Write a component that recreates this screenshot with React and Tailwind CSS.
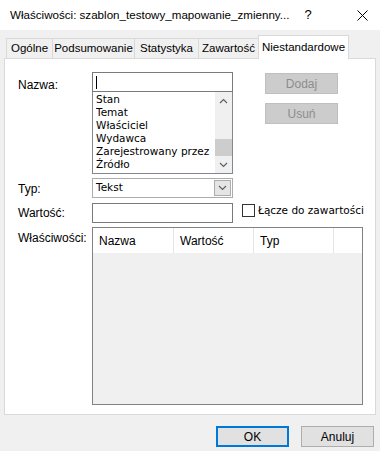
import React from 'react';

const tabs = [
  ['Ogólne', 'w-[47px]'],
  ['Podsumowanie', 'w-[82px]'],
  ['Statystyka', 'w-[64px]'],
  ['Zawartość', 'w-[60px]'],
];
const items = ['Stan', 'Temat', 'Właściciel', 'Wydawca', 'Zarejestrowany przez', 'Źródło'];
const listFont = { fontFamily: '"DejaVu Sans", sans-serif' };

const Chevron = ({ up }) => (
  <svg width="9" height="6" viewBox="0 0 9 6" fill="none" stroke="#606060" strokeWidth="1.2">
    {up ? <path d="M1 5 L4.5 1.5 L8 5" /> : <path d="M1 1 L4.5 4.5 L8 1" />}
  </svg>
);

const App = () => {
  return (
    <div className="w-[380px] h-[451px] bg-[#f0f0f0] text-[12px] text-black overflow-hidden" style={{ fontFamily: '"Liberation Sans", Arial, sans-serif' }}>
      {/* title bar */}
      <div className="h-[30px] bg-white flex items-center pl-[10px]">
        <span className="flex-1 whitespace-nowrap overflow-hidden text-[11.6px]">Właściwości: szablon_testowy_mapowanie_zmienny...</span>
        <span className="w-[20px] text-center text-[13px]">?</span>
        <span className="w-[26px]" />
        <span className="w-[36px] flex justify-center">
          <svg width="11" height="11" viewBox="0 0 11 11" stroke="#000" strokeWidth="1">
            <path d="M0.5 0.5 L10.5 10.5 M10.5 0.5 L0.5 10.5" />
          </svg>
        </span>
      </div>

      {/* tabs */}
      <div className="flex items-end pl-[6px] mt-[5px] h-[23px] relative z-10 text-[11.5px]">
        {tabs.map(([t, w], i) => (
          <div key={t} className={`${w} h-[20px] flex items-center justify-center whitespace-nowrap border-t border-[#d9d9d9] bg-[#f0f0f0] ${i === 0 ? 'border-l' : ''} border-r`}>
            {t}
          </div>
        ))}
        <div className="w-[91px] h-[24px] flex items-center justify-center whitespace-nowrap bg-white border border-b-0 border-[#d9d9d9] -mb-px -ml-px">
          Niestandardowe
        </div>
      </div>

      {/* panel */}
      <div className="mx-[4px] h-[357px] bg-white border border-[#d9d9d9] pt-[13px] pl-[13px]">
        <div className="flex">
          <div className="w-[74px] pt-[4px]">Nazwa:</div>
          <div className="w-[141px]">
            <div className="h-[20px] border border-[#7a7a7a] flex items-center pl-[3px]">
              <div className="w-px h-[13px] bg-black" />
            </div>
            <div className="h-[82px] border border-[#828790] border-t-0 flex">
              <div className="flex-1 pl-[3px] pt-[1px] text-[10.5px] leading-[13px]" style={listFont}>
                {items.map((it) => (
                  <div key={it} className="whitespace-nowrap overflow-hidden">{it}</div>
                ))}
              </div>
              <div className="w-[17px] bg-[#f0f0f0] flex flex-col items-center">
                <div className="h-[17px] flex items-center justify-center"><Chevron up /></div>
                <div className="flex-1 w-full flex flex-col">
                  <div className="flex-1" />
                  <div className="h-[17px] bg-[#cdcdcd]" />
                </div>
                <div className="h-[17px] flex items-center justify-center"><Chevron /></div>
              </div>
            </div>
          </div>
          <div className="ml-[32px] flex flex-col gap-[9px] pt-[1px]">
            <div className="w-[73px] h-[21px] bg-[#cccccc] border border-[#bfbfbf] text-[#8c8c8c] flex items-center justify-center">Dodaj</div>
            <div className="w-[73px] h-[21px] bg-[#cccccc] border border-[#bfbfbf] text-[#8c8c8c] flex items-center justify-center">Usuń</div>
          </div>
        </div>

        <div className="flex mt-[4px]">
          <div className="w-[74px] pt-[2px]">Typ:</div>
          <div className="w-[141px] h-[20px] border border-[#acacac] flex items-center pl-[3px] pr-[1px]">
            <span className="flex-1 text-[10.5px]" style={listFont}>Tekst</span>
            <div className="w-[17px] h-[16px] bg-[#e5e5e5] border border-[#acacac] flex items-center justify-center"><Chevron /></div>
          </div>
        </div>

        <div className="flex mt-[5px] items-start">
          <div className="w-[74px] pt-[1px]">Wartość:</div>
          <div className="w-[141px] h-[20px] border border-[#7a7a7a]" />
          <div className="ml-[9px] mt-[1px] w-[13px] h-[13px] border border-[#333333] bg-white" />
          <div className="ml-[3px] text-[10.5px] leading-[15px] whitespace-nowrap" style={listFont}>Łącze do zawartości</div>
        </div>

        <div className="flex mt-[4px]">
          <div className="w-[74px] pt-[2px]">Właściwości:</div>
          <div className="w-[271px] h-[178px] border border-[#828282] bg-[#f0f0f0]">
            <div className="h-[25px] bg-white flex">
              <div className="w-[81px] border-r border-[#e5e5e5] flex items-center pl-[6px]">Nazwa</div>
              <div className="w-[80px] border-r border-[#e5e5e5] flex items-center pl-[6px]">Wartość</div>
              <div className="w-[80px] border-r border-[#e5e5e5] flex items-center pl-[6px]">Typ</div>
              <div className="flex-1" />
            </div>
          </div>
        </div>
      </div>

      {/* footer buttons */}
      <div className="flex justify-end gap-[12px] pr-[6px] mt-[11px]">
        <div className="w-[73px] h-[21px] bg-[#e1e1e1] border-2 border-[#0078d7] flex items-center justify-center">OK</div>
        <div className="w-[73px] h-[21px] bg-[#e1e1e1] border border-[#adadad] flex items-center justify-center">Anuluj</div>
      </div>
    </div>
  );
};

export default App;
